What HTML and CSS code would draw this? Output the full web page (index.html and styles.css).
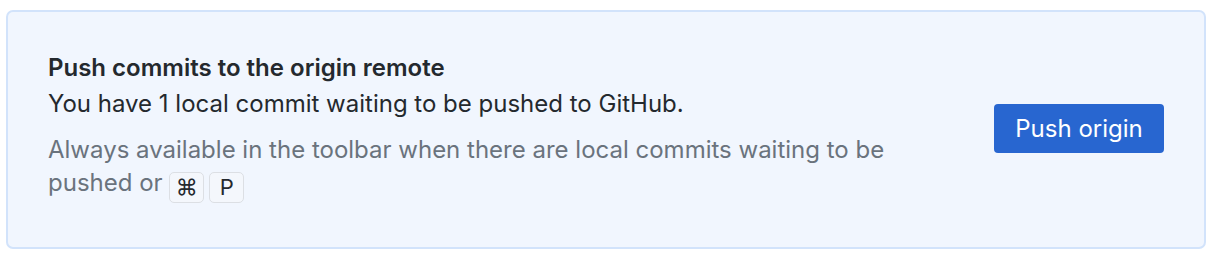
FILE: index.html
```html
<!DOCTYPE html>
<html>
<head>
<meta charset="utf-8">
<link rel="stylesheet" href="styles.css">
</head>
<body>
<div class="page">
  <div class="card">
    <div class="info">
      <div class="title">Push commits to the origin remote</div>
      <div class="desc">You have 1 local commit waiting to be pushed to GitHub.</div>
      <div class="hint">Always available in the toolbar when there are local commits waiting to be pushed or <kbd class="key">⌘</kbd><kbd class="key key-next">P</kbd></div>
    </div>
    <button class="btn">Push origin</button>
  </div>
</div>
</body>
</html>
```
FILE: styles.css
```css
html, body { margin: 0; padding: 0; background: #ffffff; }
body { font-family: Inter, "Noto Sans", sans-serif; }
.page { padding: 10px 14px 16px 6px; }
.card {
  display: flex;
  align-items: center;
  justify-content: space-between;
  background: #f1f6fe;
  border: 2px solid #d2e3fb;
  border-radius: 7px;
  padding: 38px 40px 44px 40px;
}
.info { width: 880px; }
.title { font-size: 24px; font-weight: 600; color: #24292e; line-height: 36px; }
.desc { font-size: 24px; color: #24292e; line-height: 36px; margin-bottom: 11px; }
.hint { font-size: 24px; color: #6a737d; line-height: 33px; }
.key {
  display: inline-block;
  font-family: Inter, "Noto Sans", sans-serif;
  font-size: 22px;
  color: #24292e;
  background: #f4f7fc;
  border: 1px solid #dcdfe4;
  border-radius: 5px;
  width: 33px;
  height: 29px;
  line-height: 29px;
  text-align: center;
  vertical-align: -4px;
  padding: 0;
}
.key-next { margin-left: 5px; }
.btn {
  font-family: Inter, "Noto Sans", sans-serif;
  font-size: 24px;
  color: #ffffff;
  background: #2866d0;
  border: none;
  border-radius: 4px;
  width: 170px;
  height: 49px;
  padding: 0;
  margin-top: 4px;
}
```
